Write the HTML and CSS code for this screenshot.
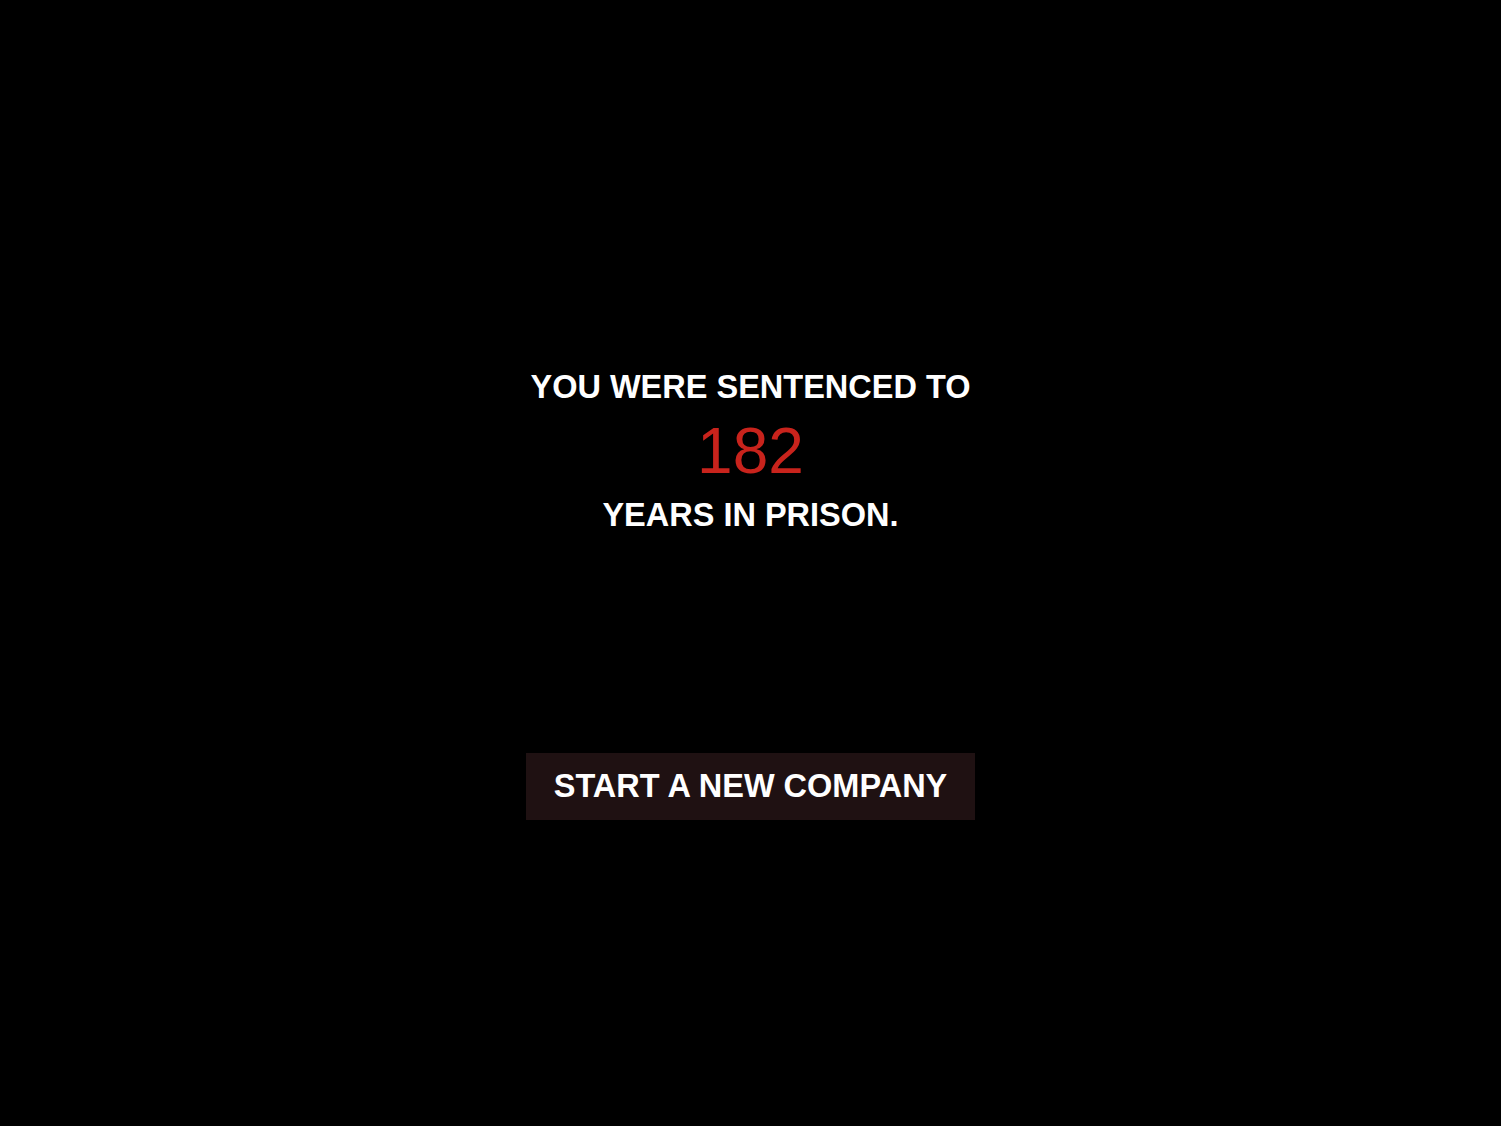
FILE: index.html
```html
<!DOCTYPE html>
<html>

<head>
  <title>Game Over</title>
  <link rel="stylesheet" href="styles.css">
</head>

<body>
  <main class="verdict">
    <p class="line">You were sentenced to</p>
    <p class="years">182</p>
    <p class="line">Years in prison.</p>
    <button type="button" class="restart">Start a new company</button>
  </main>
</body>

</html>
```
FILE: styles.css
```css
*, *::before, *::after {
  box-sizing: border-box;
}
html, body {
  margin: 0;
  height: 100%;
}
body {
  background: #000;
  color: #fff;
  font-family: 'Liberation Sans', Arial, sans-serif;
}

.verdict {
  display: flex;
  flex-direction: column;
  align-items: center;
  padding-top: 366px;
}

.verdict p {
  margin: 0;
}

.line {
  font-size: 32.5px;
  font-weight: bold;
  text-transform: uppercase;
  line-height: 42px;
}

.years {
  color: #c8231c;
  font-size: 64px;
  line-height: 86px;
}

.restart {
  margin-top: 217px;
  width: 449px;
  height: 67px;
  background: #1f1112;
  color: #fff;
  border: none;
  font: inherit;
  font-size: 32.5px;
  font-weight: bold;
  text-transform: uppercase;
  cursor: pointer;
}
```
